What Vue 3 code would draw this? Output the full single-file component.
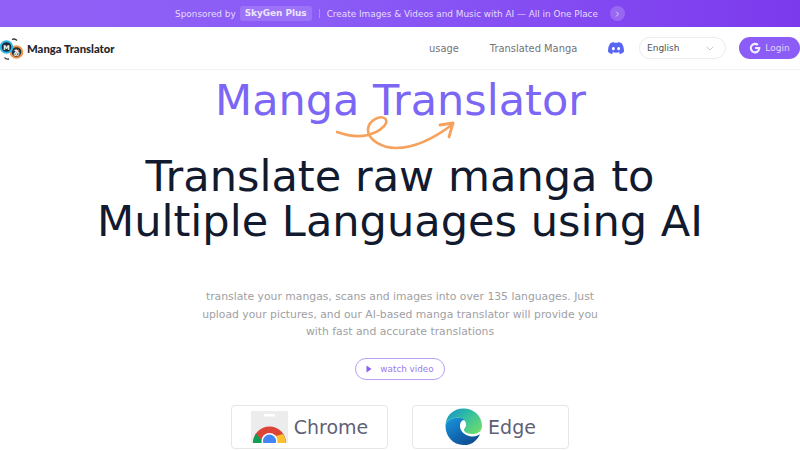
<template>
  <div class="page">
    <div class="banner">
      <span class="sponsor">Sponsored by</span>
      <span class="brand">SkyGen Plus</span>
      <span class="divider"></span>
      <span class="promo">Create Images &amp; Videos and Music with AI — All in One Place</span>
      <span class="next">
        <svg width="8" height="8" viewBox="0 0 8 8"><path d="M3 1.500 5.500 4 3 6.500" fill="none" stroke="#ddd0fb" stroke-width="1"/></svg>
      </span>
    </div>

    <header class="nav">
      <div class="logo">
        <svg class="logo-mark" width="26" height="26" viewBox="0 0 26 26">
          <path d="M12 4.500c2-1 3.500-.5 5 1M9 24c-2 .5-3.500 0-4.500-1.500" fill="none" stroke="#333" stroke-width="1.300"/>
          <circle cx="16.500" cy="17" r="5.800" fill="#27303a" stroke="#f0964a" stroke-width="2"/>
          <circle cx="6.500" cy="12" r="5.800" fill="#1f2a38" stroke="#2eb4e6" stroke-width="2"/>
          <text x="6.500" y="14.500" text-anchor="middle" class="logo-letter">M</text>
          <text x="16.500" y="19.500" text-anchor="middle" class="logo-letter">あ</text>
        </svg>
        <span class="logo-text">Manga Translator</span>
      </div>
      <nav class="links">
        <a>usage</a>
        <a>Translated Manga</a>
      </nav>
      <svg class="discord" width="16" height="12" viewBox="0 0 127 96">
        <path fill="#5865f2" d="M107.700 8.100A105 105 0 0 0 81.500 0a72 72 0 0 0-3.400 6.800 97.700 97.700 0 0 0-29.100 0A72 72 0 0 0 45.600 0a105.900 105.900 0 0 0-26.300 8.100C2.700 32.700-1.800 56.600.4 80.200A105.700 105.700 0 0 0 32.600 96.400a77.700 77.700 0 0 0 6.900-11.200 68 68 0 0 1-10.900-5.200c.9-.7 1.800-1.400 2.600-2.100a75.600 75.600 0 0 0 64.600 0c.9.700 1.700 1.400 2.600 2.100a68.700 68.700 0 0 1-10.900 5.200 77 77 0 0 0 6.900 11.200 105.300 105.300 0 0 0 32.200-16.200c2.600-27.300-4.500-51-18.900-72.100ZM42.300 65.700c-6.300 0-11.500-5.700-11.500-12.700s5-12.800 11.500-12.800S53.900 46 53.800 53s-5.100 12.700-11.500 12.700Zm42.400 0c-6.300 0-11.500-5.700-11.500-12.700s5-12.800 11.500-12.800S96.300 46 96.200 53s-5 12.700-11.500 12.700Z"/>
      </svg>
      <div class="lang">
        <span>English</span>
        <svg width="8" height="5" viewBox="0 0 8 5"><path d="M.8.8 4 4l3.200-3.200" fill="none" stroke="#c9c9cf" stroke-width="1"/></svg>
      </div>
      <button class="login">
        <svg width="12" height="12" viewBox="0 0 24 24"><path d="M22.500 10H12v4.200h6A6.300 6.300 0 1 1 16.300 7.500l3.100-3.100A10.600 10.600 0 1 0 22.800 12c0-.7-.1-1.400-.3-2Z" fill="#f3eefe"/></svg>
        Login
      </button>
    </header>

    <main class="hero">
      <div class="title-wrap">
        <div class="title">Manga Translator</div>
        <svg class="swoosh" width="122" height="36" viewBox="0 0 122 36">
          <path d="M1 17C12 21 24 22 32 20C44 17 54 8 49 3.500C44 0 33 5 32 14C31 25 47 33 60 33C80 33 100 22 117 9" fill="none" stroke="#f6a15c" stroke-width="2.600" stroke-linecap="round"/>
          <path d="M104 10 117 8 113 22" fill="none" stroke="#f6a15c" stroke-width="2.800" stroke-linecap="round" stroke-linejoin="round"/>
        </svg>
      </div>
      <h1>Translate raw manga to<br>Multiple Languages using AI</h1>
      <p class="desc">translate your mangas, scans and images into over 135 languages. Just upload your pictures, and our AI-based manga translator will provide you with fast and accurate translations</p>
      <button class="watch">
        <svg width="6" height="8" viewBox="0 0 6 8"><path d="M.5.500 5.500 4 .5 7.500Z" fill="#8b5cf6"/></svg>
        watch video
      </button>
      <div class="stores">
        <div class="store">
          <svg class="store-icon" width="37" height="32" viewBox="0 0 37 32">
            <rect width="37" height="32" fill="#ececec"/>
            <rect x="13" y="3" width="11" height="2.500" fill="#fff"/>
            <path d="M2 32a16.500 16.500 0 0 1 33 0H25a6.500 6.500 0 0 0-13 0Z" fill="#db4437"/>
            <path d="M2 32a16.500 16.500 0 0 1 3-9.500l8 9.500Z" fill="#0f9d58"/>
            <path d="M24 32a7 7 0 0 0-3-6l11-3a16.500 16.500 0 0 1 3 9Z" fill="#fbc02d"/>
            <circle cx="18.500" cy="30" r="8" fill="#fff"/>
            <circle cx="18.500" cy="30" r="6.500" fill="#4285f4"/>
          </svg>
          <span>Chrome</span>
        </div>
        <div class="store">
          <svg class="store-icon" width="37" height="37" viewBox="0 0 37 37">
            <defs>
              <linearGradient id="edgeTop" x1="0" y1="0" x2="1" y2="0.800">
                <stop offset="0" stop-color="#0f8fce"/>
                <stop offset="0.500" stop-color="#33bfa0"/>
                <stop offset="1" stop-color="#6fdb6f"/>
              </linearGradient>
              <linearGradient id="edgeLow" x1="0" y1="0" x2="0.800" y2="1">
                <stop offset="0" stop-color="#1a9ade"/>
                <stop offset="0.600" stop-color="#1166b0"/>
                <stop offset="1" stop-color="#114a8b"/>
              </linearGradient>
            </defs>
            <path d="M.5 18C.5 8 8 .5 18.500.5 29 .5 37 8 37 18c0 5-4 8-9 8-4 0-8-1-9-3.500-.5-1.500 1-2 2-4.500 1-4-3-8.500-8-8.500C7 9.500.5 13 .5 18Z" fill="url(#edgeTop)"/>
            <path d="M.5 18C.5 13 7 9.500 13 9.500c3 0 5 1 6.500 2.500C15 12 14 18 16 22c2 4 7 6.500 12 6.500 3 0 5-1 7-2.500-2 5-6 9-11 10.500-1.800.4-3.700.5-5.500.5C8 37 .5 28 .5 18Z" fill="url(#edgeLow)"/>
          </svg>
          <span>Edge</span>
        </div>
      </div>
    </main>
  </div>
</template>

<script setup>
</script>

<style>
html,
body {
  margin: 0;
  background: #fff;
  overflow: hidden;
}
</style>

<style scoped>
.page {
  width: 800px;
  height: 450px;
  overflow: hidden;
  font-family: "DejaVu Sans", sans-serif;
}

.banner {
  height: 27px;
  display: flex;
  align-items: center;
  justify-content: center;
  gap: 4px;
  background: linear-gradient(90deg, #9161f7, #8b5cf6 40%, #7c3aed);
  color: #e6dcfd;
  font-size: 8.900px;
}

.brand {
  background: rgba(255, 255, 255, 0.14);
  border-radius: 3px;
  padding: 0 5px;
  height: 15px;
  line-height: 15px;
  font-weight: 700;
  color: #ece5fe;
}

.divider {
  width: 1px;
  height: 9px;
  background: rgba(255, 255, 255, 0.3);
  margin: 0 3px;
}

.next {
  width: 15px;
  height: 15px;
  border-radius: 50%;
  background: rgba(255, 255, 255, 0.18);
  display: flex;
  align-items: center;
  justify-content: center;
  margin-left: 8px;
}

.nav {
  height: 42px;
  border-bottom: 1px solid #f3f3f4;
  display: flex;
  align-items: center;
}

.logo {
  display: flex;
  align-items: center;
  gap: 1px;
  width: 429px;
}

.logo-letter {
  font-size: 6.500px;
  font-weight: 700;
  fill: #fff;
  font-family: "DejaVu Sans", "Noto Sans CJK JP", sans-serif;
}

.logo-text {
  font-family: Lato, "Liberation Sans", sans-serif;
  font-weight: 900;
  font-size: 11.300px;
  color: #25252b;
}

.links {
  display: flex;
  gap: 31px;
  width: 179px;
  font-size: 9.900px;
  color: #737378;
}

.discord {
  margin-right: 15px;
}

.lang {
  width: 87px;
  height: 22px;
  box-sizing: border-box;
  border: 1px solid #ececef;
  border-radius: 11px;
  padding: 0 11px 0 7px;
  display: flex;
  align-items: center;
  justify-content: space-between;
  font-size: 9px;
  color: #50505a;
  margin-right: 13px;
}

.login {
  width: 61px;
  height: 22px;
  border: 0;
  border-radius: 11px;
  background: #8b5cf6;
  color: #e2d7fd;
  display: flex;
  align-items: center;
  justify-content: center;
  gap: 4px;
  font-family: inherit;
  font-size: 9px;
  padding: 0;
}

.hero {
  display: flex;
  flex-direction: column;
  align-items: center;
}

.title-wrap {
  position: relative;
  height: 60px;
  margin-left: 1px;
}

.title {
  font-size: 43px;
  line-height: 60px;
  color: #7c66f5;
}

.swoosh {
  position: absolute;
  left: 121px;
  top: 45px;
}

h1 {
  margin: 24px 0 0;
  font-size: 43.100px;
  line-height: 45px;
  font-weight: 400;
  color: #111a2e;
  text-align: center;
}

.desc {
  width: 400px;
  margin: 44px 0 0;
  font-size: 10.800px;
  line-height: 17.500px;
  color: #a0a0a4;
  text-align: center;
}

.watch {
  margin-top: 17px;
  width: 90px;
  height: 22px;
  border: 1px solid #b9a2f4;
  border-radius: 11px;
  background: #fff;
  color: #9b79ef;
  font-family: inherit;
  font-size: 8.800px;
  display: flex;
  align-items: center;
  justify-content: center;
  gap: 8px;
  padding: 0;
}

.stores {
  display: flex;
  gap: 24px;
  margin-top: 25px;
}

.store {
  width: 157px;
  height: 44px;
  box-sizing: border-box;
  border: 1px solid #e6e6ea;
  border-radius: 4px;
  display: flex;
  align-items: center;
  justify-content: center;
  gap: 6px;
  font-size: 19px;
  color: #5f5f78;
}

.store-icon {
  flex-shrink: 0;
}
</style>
